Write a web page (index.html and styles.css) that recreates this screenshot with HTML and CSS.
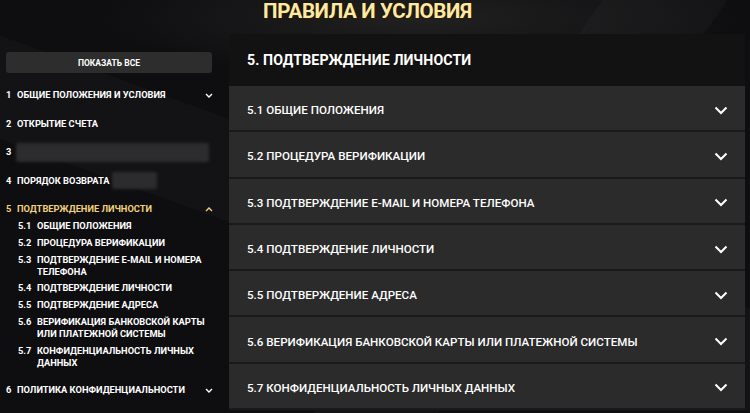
FILE: index.html
```html
<!DOCTYPE html>
<html lang="ru">
<head>
<meta charset="utf-8">
<title>Правила и условия</title>
<link rel="stylesheet" href="styles.css">
</head>
<body>
<div class="page">
  <header class="top">
    <h1 class="title">ПРАВИЛА И УСЛОВИЯ</h1>
  </header>
  <div class="main">
    <aside class="side">
      <button class="show-all">ПОКАЗАТЬ ВСЕ</button>
      <ul class="nav">
        <li>
          <div class="row"><span class="num">1</span><span class="txt">ОБЩИЕ ПОЛОЖЕНИЯ И УСЛОВИЯ</span>
            <svg class="chev" viewBox="0 0 8 5"><path d="M1 1l3 3 3-3"/></svg></div>
        </li>
        <li>
          <div class="row"><span class="num">2</span><span class="txt">ОТКРЫТИЕ СЧЕТА</span></div>
        </li>
        <li>
          <div class="row"><span class="num">3</span><span class="blur wide"></span></div>
        </li>
        <li>
          <div class="row"><span class="num">4</span><span class="txt">ПОРЯДОК ВОЗВРАТА</span><span class="blur short"></span></div>
        </li>
        <li class="open">
          <div class="row active"><span class="num">5</span><span class="txt">ПОДТВЕРЖДЕНИЕ ЛИЧНОСТИ</span>
            <svg class="chev" viewBox="0 0 8 5"><path d="M1 4l3-3 3 3"/></svg></div>
          <ul class="sub">
            <li><span class="snum">5.1</span><span class="stxt">ОБЩИЕ ПОЛОЖЕНИЯ</span></li>
            <li><span class="snum">5.2</span><span class="stxt">ПРОЦЕДУРА ВЕРИФИКАЦИИ</span></li>
            <li><span class="snum">5.3</span><span class="stxt">ПОДТВЕРЖДЕНИЕ E-MAIL И НОМЕРА<br>ТЕЛЕФОНА</span></li>
            <li><span class="snum">5.4</span><span class="stxt">ПОДТВЕРЖДЕНИЕ ЛИЧНОСТИ</span></li>
            <li><span class="snum">5.5</span><span class="stxt">ПОДТВЕРЖДЕНИЕ АДРЕСА</span></li>
            <li><span class="snum">5.6</span><span class="stxt">ВЕРИФИКАЦИЯ БАНКОВСКОЙ КАРТЫ<br>ИЛИ ПЛАТЕЖНОЙ СИСТЕМЫ</span></li>
            <li><span class="snum">5.7</span><span class="stxt">КОНФИДЕНЦИАЛЬНОСТЬ ЛИЧНЫХ<br>ДАННЫХ</span></li>
          </ul>
        </li>
        <li>
          <div class="row"><span class="num">6</span><span class="txt">ПОЛИТИКА КОНФИДЕНЦИАЛЬНОСТИ</span>
            <svg class="chev" viewBox="0 0 8 5"><path d="M1 1l3 3 3-3"/></svg></div>
        </li>
      </ul>
    </aside>
    <section class="panel">
      <h2 class="panel-title">5. ПОДТВЕРЖДЕНИЕ ЛИЧНОСТИ</h2>
      <div class="acc">
        <div class="item"><span>5.1 ОБЩИЕ ПОЛОЖЕНИЯ</span><svg class="ichev" viewBox="0 0 14 9"><path d="M1.5 1.5l5.5 5.5 5.5-5.5"/></svg></div>
        <div class="item"><span>5.2 ПРОЦЕДУРА ВЕРИФИКАЦИИ</span><svg class="ichev" viewBox="0 0 14 9"><path d="M1.5 1.5l5.5 5.5 5.5-5.5"/></svg></div>
        <div class="item"><span>5.3 ПОДТВЕРЖДЕНИЕ E-MAIL И НОМЕРА ТЕЛЕФОНА</span><svg class="ichev" viewBox="0 0 14 9"><path d="M1.5 1.5l5.5 5.5 5.5-5.5"/></svg></div>
        <div class="item"><span>5.4 ПОДТВЕРЖДЕНИЕ ЛИЧНОСТИ</span><svg class="ichev" viewBox="0 0 14 9"><path d="M1.5 1.5l5.5 5.5 5.5-5.5"/></svg></div>
        <div class="item"><span>5.5 ПОДТВЕРЖДЕНИЕ АДРЕСА</span><svg class="ichev" viewBox="0 0 14 9"><path d="M1.5 1.5l5.5 5.5 5.5-5.5"/></svg></div>
        <div class="item"><span>5.6 ВЕРИФИКАЦИЯ БАНКОВСКОЙ КАРТЫ ИЛИ ПЛАТЕЖНОЙ СИСТЕМЫ</span><svg class="ichev" viewBox="0 0 14 9"><path d="M1.5 1.5l5.5 5.5 5.5-5.5"/></svg></div>
        <div class="item"><span>5.7 КОНФИДЕНЦИАЛЬНОСТЬ ЛИЧНЫХ ДАННЫХ</span><svg class="ichev" viewBox="0 0 14 9"><path d="M1.5 1.5l5.5 5.5 5.5-5.5"/></svg></div>
      </div>
    </section>
  </div>
</div>
</body>
</html>
```
FILE: styles.css
```css
* { box-sizing: border-box; }
html, body { margin: 0; padding: 0; }
body {
  width: 750px;
  height: 413px;
  overflow: hidden;
  font-family: Roboto, "Noto Sans", "Liberation Sans", sans-serif;
  color: #fff;
  background:
    linear-gradient(125deg, transparent 0 58%, rgba(255,255,255,0.025) 58% 70%, transparent 70%),
    linear-gradient(200deg, transparent 0 45%, rgba(255,255,255,0.018) 45% 60%, transparent 60%),
    radial-gradient(ellipse 320px 60px at 420px 18px, #222121 0%, transparent 100%),
    #0e0d10;
}
.page { display: flex; flex-direction: column; height: 413px; }
.top {
  height: 34px;
  display: flex;
  justify-content: center;
  padding-right: 15px;
}
.title {
  margin: 0;
  font-size: 20.5px;
  line-height: 22px;
  font-weight: 700;
  letter-spacing: -0.35px;
  color: #fde9a6;
  text-shadow: 0 0 1px #3a2a05, 1px 1px 1px #2a1e04, -1px 0 1px #1a1204;
}
.main { display: flex; flex: 1; }
.side {
  width: 229px;
  flex: none;
  padding: 18px 17px 0 6px;
}
.show-all {
  display: block;
  width: 206px;
  height: 21px;
  border: 0;
  border-radius: 3px;
  background: #2d2d2d;
  color: #fff;
  font-family: inherit;
  font-size: 8.5px;
  font-weight: 700;
  padding: 0;
  margin-bottom: 8px;
}
.nav, .sub { list-style: none; margin: 0; padding: 0; }
.row {
  display: flex;
  align-items: center;
  padding: 8px 0;
  height: 28.5px;
  font-size: 9.3px;
  font-weight: 700;
  line-height: 12.5px;
  white-space: nowrap;
}
.num { width: 11px; flex: none; }
.txt { flex: none; }
.row.active { color: #f1d27c; }
.chev {
  width: 8px;
  height: 5px;
  margin-left: auto;
  margin-right: -1px;
  fill: none;
  stroke: currentColor;
  stroke-width: 1.4;
}
.blur {
  display: block;
  height: 19px;
  background: #2c2c2e;
  filter: blur(1.5px);
  border-radius: 2px;
}
.blur.wide { width: 193px; margin-left: -1px; }
.blur.short { width: 45px; margin-left: 2px; height: 17px; }
.sub {
  display: flex;
  flex-direction: column;
  gap: 4.8px;
  margin: -3.5px 0 7px;
  padding-left: 12px;
}
.sub li {
  display: flex;
  font-size: 9.3px;
  font-weight: 700;
  line-height: 12px;
  white-space: nowrap;
}
.snum { width: 19px; flex: none; }
.panel {
  width: 516px;
  flex: none;
  display: flex;
  flex-direction: column;
}
.panel-title {
  margin: 0;
  height: 52px;
  background: #121212;
  display: flex;
  align-items: center;
  padding: 0 18px;
  font-size: 14.2px;
  font-weight: 700;
  letter-spacing: 0.1px;
}
.acc { display: flex; flex-direction: column; background: #1a1a1a; }
.item {
  height: 44.3px;
  margin-bottom: 2px;
  background: #2b2b2b;
  display: flex;
  align-items: center;
  padding: 4px 17px 0 18px;
  font-size: 11.6px;
  font-weight: 500;
  white-space: nowrap;
}
.ichev {
  width: 14px;
  height: 9px;
  margin-left: auto;
  fill: none;
  stroke: #fff;
  stroke-width: 2;
}
```
